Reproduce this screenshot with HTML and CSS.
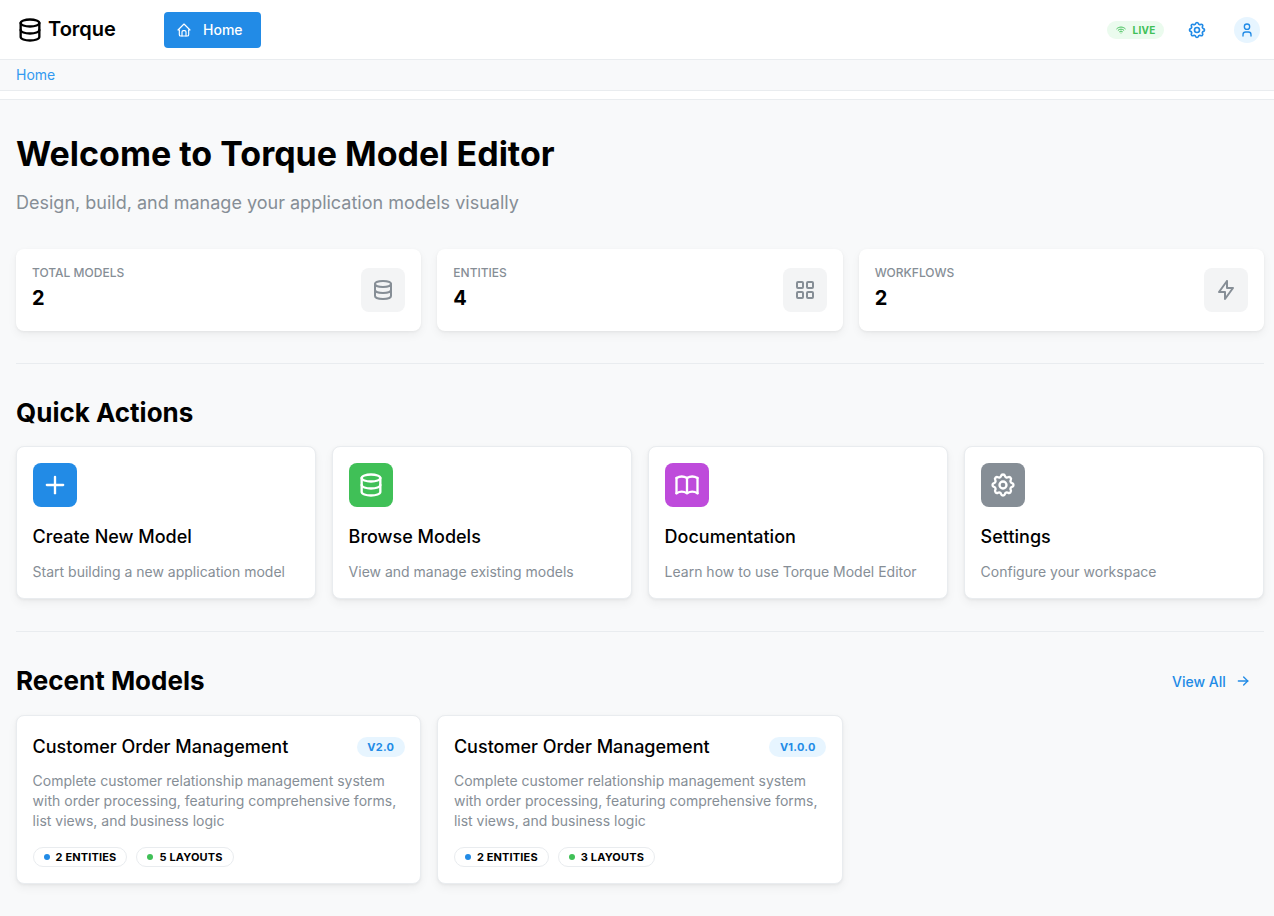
FILE: index.html
```html
<!DOCTYPE html>
<html lang="en">
<head>
    <meta charset="UTF-8">
    <meta name="viewport" content="width=device-width, initial-scale=1.0">
    <title>Torque Model Editor</title>
    <link rel="stylesheet" href="styles.css">
</head>
<body>
    <!-- icon sprite -->
    <svg class="sprite" aria-hidden="true">
        <symbol id="i-database" viewBox="0 0 24 24"><ellipse cx="12" cy="6" rx="8" ry="3"/><path d="M4 6v6a8 3 0 0 0 16 0V6"/><path d="M4 12v6a8 3 0 0 0 16 0v-6"/></symbol>
        <symbol id="i-home" viewBox="0 0 24 24"><path d="M5 12H3l9-9 9 9h-2"/><path d="M5 12v7a2 2 0 0 0 2 2h10a2 2 0 0 0 2-2v-7"/><path d="M9 21v-6a2 2 0 0 1 2-2h2a2 2 0 0 1 2 2v6"/></symbol>
        <symbol id="i-settings" viewBox="0 0 24 24"><path d="M10.325 4.317c.426-1.756 2.924-1.756 3.35 0a1.724 1.724 0 0 0 2.573 1.066c1.543-.94 3.31.826 2.37 2.37a1.724 1.724 0 0 0 1.065 2.572c1.756.426 1.756 2.924 0 3.35a1.724 1.724 0 0 0-1.066 2.573c.94 1.543-.826 3.31-2.37 2.37a1.724 1.724 0 0 0-2.572 1.065c-.426 1.756-2.924 1.756-3.35 0a1.724 1.724 0 0 0-2.573-1.066c-1.543.94-3.31-.826-2.37-2.37a1.724 1.724 0 0 0-1.065-2.572c-1.756-.426-1.756-2.924 0-3.35a1.724 1.724 0 0 0 1.066-2.573c-.94-1.543.826-3.31 2.37-2.37 1 .608 2.296.07 2.572-1.065z"/><circle cx="12" cy="12" r="3"/></symbol>
        <symbol id="i-user" viewBox="0 0 24 24"><circle cx="12" cy="7" r="4"/><path d="M6 21v-2a4 4 0 0 1 4-4h4a4 4 0 0 1 4 4v2"/></symbol>
        <symbol id="i-wifi" viewBox="0 0 24 24"><path d="M12 18h.01"/><path d="M9.172 15.172a4 4 0 0 1 5.656 0"/><path d="M6.343 12.343a8 8 0 0 1 11.314 0"/><path d="M3.515 9.515c4.686-4.687 12.284-4.687 17 0"/></symbol>
        <symbol id="i-grid" viewBox="0 0 24 24"><rect x="4" y="4" width="6" height="6" rx="1"/><rect x="14" y="4" width="6" height="6" rx="1"/><rect x="4" y="14" width="6" height="6" rx="1"/><rect x="14" y="14" width="6" height="6" rx="1"/></symbol>
        <symbol id="i-bolt" viewBox="0 0 24 24"><path d="M13 3v7h6l-8 11v-7H5l8-11"/></symbol>
        <symbol id="i-plus" viewBox="0 0 24 24"><path d="M12 5v14"/><path d="M5 12h14"/></symbol>
        <symbol id="i-book" viewBox="0 0 24 24"><path d="M3 19a9 9 0 0 1 9 0a9 9 0 0 1 9 0"/><path d="M3 6a9 9 0 0 1 9 0a9 9 0 0 1 9 0"/><path d="M3 6v13"/><path d="M12 6v13"/><path d="M21 6v13"/></symbol>
        <symbol id="i-arrow" viewBox="0 0 24 24"><path d="M5 12h14"/><path d="M13 18l6-6"/><path d="M13 6l6 6"/></symbol>
    </svg>

    <header class="topbar">
        <div class="brand">
            <svg class="icon brand-icon"><use href="#i-database"/></svg>
            <span class="brand-name">Torque</span>
        </div>
        <a class="nav-button" href="#">
            <svg class="icon nav-icon"><use href="#i-home"/></svg>
            <span>Home</span>
        </a>
        <div class="topbar-right">
            <span class="live-pill">
                <svg class="icon live-icon"><use href="#i-wifi"/></svg>
                LIVE
            </span>
            <svg class="icon settings-icon"><use href="#i-settings"/></svg>
            <span class="avatar"><svg class="icon avatar-icon"><use href="#i-user"/></svg></span>
        </div>
    </header>

    <div class="breadcrumb"><a href="#">Home</a></div>
    <div class="subnav"></div>

    <main class="content">
        <h1 class="page-title">Welcome to Torque Model Editor</h1>
        <p class="page-subtitle">Design, build, and manage your application models visually</p>

        <section class="stats">
            <div class="stat-card">
                <div class="stat-text">
                    <div class="stat-label">Total Models</div>
                    <div class="stat-value">2</div>
                </div>
                <span class="stat-icon"><svg class="icon"><use href="#i-database"/></svg></span>
            </div>
            <div class="stat-card">
                <div class="stat-text">
                    <div class="stat-label">Entities</div>
                    <div class="stat-value">4</div>
                </div>
                <span class="stat-icon"><svg class="icon"><use href="#i-grid"/></svg></span>
            </div>
            <div class="stat-card">
                <div class="stat-text">
                    <div class="stat-label">Workflows</div>
                    <div class="stat-value">2</div>
                </div>
                <span class="stat-icon"><svg class="icon"><use href="#i-bolt"/></svg></span>
            </div>
        </section>

        <hr class="divider">

        <h2 class="section-title">Quick Actions</h2>
        <section class="actions">
            <a class="action-card" href="#">
                <span class="action-icon blue"><svg class="icon"><use href="#i-plus"/></svg></span>
                <h3>Create New Model</h3>
                <p>Start building a new application model</p>
            </a>
            <a class="action-card" href="#">
                <span class="action-icon green"><svg class="icon"><use href="#i-database"/></svg></span>
                <h3>Browse Models</h3>
                <p>View and manage existing models</p>
            </a>
            <a class="action-card" href="#">
                <span class="action-icon grape"><svg class="icon"><use href="#i-book"/></svg></span>
                <h3>Documentation</h3>
                <p>Learn how to use Torque Model Editor</p>
            </a>
            <a class="action-card" href="#">
                <span class="action-icon gray"><svg class="icon"><use href="#i-settings"/></svg></span>
                <h3>Settings</h3>
                <p>Configure your workspace</p>
            </a>
        </section>

        <hr class="divider">

        <div class="section-head">
            <h2 class="section-title">Recent Models</h2>
            <a class="view-all" href="#">
                View All
                <svg class="icon"><use href="#i-arrow"/></svg>
            </a>
        </div>
        <section class="models">
            <article class="model-card">
                <div class="model-head">
                    <h3>Customer Order Management</h3>
                    <span class="version">v2.0</span>
                </div>
                <p>Complete customer relationship management system with order processing, featuring comprehensive forms, list views, and business logic</p>
                <div class="tags">
                    <span class="tag"><i class="dot blue"></i>2 entities</span>
                    <span class="tag"><i class="dot green"></i>5 layouts</span>
                </div>
            </article>
            <article class="model-card">
                <div class="model-head">
                    <h3>Customer Order Management</h3>
                    <span class="version">v1.0.0</span>
                </div>
                <p>Complete customer relationship management system with order processing, featuring comprehensive forms, list views, and business logic</p>
                <div class="tags">
                    <span class="tag"><i class="dot blue"></i>2 entities</span>
                    <span class="tag"><i class="dot green"></i>3 layouts</span>
                </div>
            </article>
        </section>
    </main>
</body>
</html>
```

FILE: styles.css
```css
* {
    box-sizing: border-box;
}

body {
    font-family: Inter, "Noto Sans", sans-serif;
    margin: 0;
    padding: 0;
    background-color: #f8f9fa;
    color: #000;
}

a {
    text-decoration: none;
}

.sprite {
    display: none;
}

.icon {
    width: 24px;
    height: 24px;
    fill: none;
    stroke: currentColor;
    stroke-width: 2;
    stroke-linecap: round;
    stroke-linejoin: round;
    flex-shrink: 0;
}

/* top bar */
.topbar {
    height: 60px;
    background: #fff;
    border-bottom: 1px solid #e9ecef;
    display: flex;
    align-items: center;
    padding: 0 14px 0 16px;
}

.brand {
    display: flex;
    align-items: center;
    gap: 4px;
    width: 148px;
}

.brand-icon {
    width: 28px;
    height: 28px;
}

.brand-name {
    font-size: 20px;
    font-weight: 600;
    padding-bottom: 2px;
}

.nav-button {
    width: 97px;
    height: 36px;
    background-color: #228be6;
    color: #fff;
    border-radius: 4px;
    display: flex;
    align-items: center;
    gap: 11px;
    padding-left: 12px;
    font-size: 14px;
    font-weight: 500;
}

.nav-icon {
    width: 16px;
    height: 16px;
    stroke-width: 1.75;
}

.topbar-right {
    margin-left: auto;
    display: flex;
    align-items: center;
}

.live-pill {
    width: 57px;
    height: 18px;
    border-radius: 9px;
    background: #ebfbee;
    color: #40c057;
    display: flex;
    align-items: center;
    justify-content: center;
    gap: 5px;
    font-size: 10px;
    font-weight: 700;
    letter-spacing: 0.25px;
}

.live-icon {
    width: 12px;
    height: 12px;
}

.settings-icon {
    width: 20px;
    height: 20px;
    color: #228be6;
    margin-left: 23px;
}

.avatar {
    width: 26px;
    height: 26px;
    border-radius: 50%;
    background: #e7f5ff;
    color: #228be6;
    display: flex;
    align-items: center;
    justify-content: center;
    margin-left: 27px;
}

.avatar-icon {
    width: 16px;
    height: 16px;
}

.breadcrumb {
    height: 31px;
    padding: 0 16px 2px;
    border-bottom: 1px solid #e9ecef;
    display: flex;
    align-items: center;
    font-size: 14px;
}

.breadcrumb a {
    color: #339af0;
}

.subnav {
    height: 9px;
    background: #fff;
    border-bottom: 1px solid #e9ecef;
}

/* main content */
.content {
    padding: 32px 10px 32px 16px;
}

.page-title {
    font-size: 34px;
    line-height: 44px;
    font-weight: 700;
    margin: 0;
}

.page-subtitle {
    font-size: 18px;
    line-height: 28px;
    color: #868e96;
    margin: 13px 0 32px;
}

.stats {
    display: grid;
    grid-template-columns: repeat(3, 1fr);
    gap: 16px;
}

.stat-card {
    height: 82px;
    background: #fff;
    border-radius: 8px;
    padding: 0 16px;
    display: flex;
    align-items: center;
    justify-content: space-between;
    box-shadow: 0 1px 3px rgba(0, 0, 0, 0.05), 0 4px 10px rgba(0, 0, 0, 0.05);
}

.stat-text {
    padding-bottom: 5px;
}

.stat-label {
    font-size: 12px;
    line-height: 16px;
    font-weight: 500;
    color: #868e96;
    text-transform: uppercase;
}

.stat-value {
    font-size: 20px;
    line-height: 26px;
    font-weight: 700;
    margin-top: 4px;
}

.stat-icon {
    width: 44px;
    height: 44px;
    border-radius: 8px;
    background: #f3f4f5;
    color: #868e96;
    display: flex;
    align-items: center;
    justify-content: center;
}

.divider {
    border: 0;
    border-top: 1px solid #e9ecef;
    margin: 32px 0;
}

.section-title {
    font-size: 26px;
    line-height: 34px;
    font-weight: 700;
    margin: 0;
}

.actions {
    display: grid;
    grid-template-columns: repeat(4, 1fr);
    gap: 16px;
    margin-top: 16px;
}

.action-card {
    height: 153px;
    background: #fff;
    border: 1px solid #e9ecef;
    border-radius: 8px;
    padding: 16px 15.6px;
    display: block;
    color: inherit;
    box-shadow: 0 1px 3px rgba(0, 0, 0, 0.05), 0 4px 10px rgba(0, 0, 0, 0.05);
}

.action-icon {
    width: 44px;
    height: 44px;
    border-radius: 8px;
    color: #fff;
    display: flex;
    align-items: center;
    justify-content: center;
}

.action-icon .icon {
    width: 28px;
    height: 28px;
}

.action-icon.blue { background: #228be6; }
.action-icon.green { background: #40c057; }
.action-icon.grape { background: #be4bdb; }
.action-icon.gray { background: #868e96; }

.action-card h3 {
    font-size: 18px;
    line-height: 24px;
    font-weight: 500;
    margin: 18px 0 0;
}

.action-card p {
    font-size: 14px;
    line-height: 20px;
    color: #868e96;
    margin: 13px 0 0;
}

.section-head {
    display: flex;
    align-items: center;
    justify-content: space-between;
}

.view-all {
    width: 79px;
    color: #228be6;
    font-size: 14px;
    font-weight: 500;
    display: flex;
    align-items: center;
    justify-content: space-between;
    margin-right: 13px;
}

.view-all .icon {
    width: 16px;
    height: 16px;
}

.models {
    display: grid;
    grid-template-columns: repeat(3, 1fr);
    gap: 16px;
    margin-top: 17px;
}

.model-card {
    height: 169px;
    background: #fff;
    border: 1px solid #e9ecef;
    border-radius: 8px;
    padding: 21px 15.6px 16px;
    box-shadow: 0 1px 3px rgba(0, 0, 0, 0.05), 0 4px 10px rgba(0, 0, 0, 0.05);
}

.model-head {
    display: flex;
    align-items: center;
    justify-content: space-between;
}

.model-head h3 {
    font-size: 18px;
    line-height: 20px;
    font-weight: 500;
    margin: 0;
}

.version {
    height: 20px;
    padding: 0 10.5px;
    border-radius: 10px;
    background: #e7f5ff;
    color: #228be6;
    font-size: 11px;
    font-weight: 700;
    line-height: 20px;
    letter-spacing: 0.25px;
    text-transform: uppercase;
}

.model-card p {
    font-size: 14px;
    line-height: 20px;
    color: #868e96;
    margin: 14px 0 0;
}

.tags {
    display: flex;
    gap: 9px;
    margin-top: 16px;
}

.tag {
    height: 20px;
    padding: 0 10px;
    border: 1px solid #e9ecef;
    border-radius: 10px;
    display: flex;
    align-items: center;
    gap: 6px;
    font-size: 11px;
    font-weight: 700;
    letter-spacing: 0.15px;
    text-transform: uppercase;
}

.dot {
    width: 6px;
    height: 6px;
    border-radius: 50%;
}

.dot.blue { background: #228be6; }
.dot.green { background: #40c057; }
```
